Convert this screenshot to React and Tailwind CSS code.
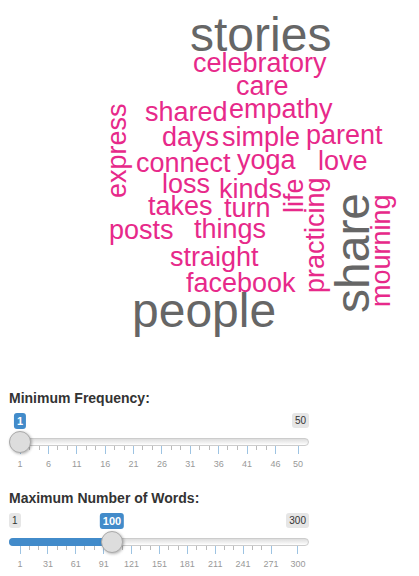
import { useState } from "react";

const MINOR = { size: 27, color: "#e7298a" };
const MAJOR = { size: 48, color: "#666666" };

// x / y mark the start of the baseline; vertical words read bottom to top.
const WORDS = [
  { text: "stories", x: 190, y: 51, ...MAJOR },
  { text: "celebratory", x: 193, y: 72, ...MINOR },
  { text: "care", x: 236, y: 95, ...MINOR },
  { text: "shared", x: 145, y: 121, ...MINOR },
  { text: "empathy", x: 229, y: 118, ...MINOR },
  { text: "days", x: 162, y: 146, ...MINOR },
  { text: "simple", x: 222, y: 146, ...MINOR },
  { text: "parent", x: 306, y: 144, ...MINOR },
  { text: "connect", x: 136, y: 172, ...MINOR },
  { text: "yoga", x: 237, y: 169, ...MINOR },
  { text: "love", x: 318, y: 170, ...MINOR },
  { text: "loss", x: 162, y: 193, ...MINOR },
  { text: "kinds", x: 219, y: 198, ...MINOR },
  { text: "takes", x: 148, y: 215, ...MINOR },
  { text: "turn", x: 224, y: 217, ...MINOR },
  { text: "posts", x: 109, y: 239, ...MINOR },
  { text: "things", x: 194, y: 238, ...MINOR },
  { text: "straight", x: 170, y: 266, ...MINOR },
  { text: "facebook", x: 186, y: 292, ...MINOR },
  { text: "people", x: 132, y: 327, ...MAJOR },
  { text: "express", x: 126, y: 198, vertical: true, ...MINOR },
  { text: "life", x: 303, y: 213, vertical: true, ...MINOR },
  { text: "practicing", x: 324, y: 293, vertical: true, ...MINOR },
  { text: "share", x: 369, y: 313, vertical: true, ...MAJOR },
  { text: "mourning", x: 390, y: 307, vertical: true, ...MINOR },
];

function WordCloud() {
  return (
    <svg
      viewBox="0 0 419 390"
      className="block w-full max-w-[419px]"
      role="img"
      aria-label="Word cloud"
    >
      {WORDS.map((w) => (
        <text
          key={w.text}
          fontSize={w.size}
          fill={w.color}
          transform={`translate(${w.x} ${w.y})${w.vertical ? " rotate(-90)" : ""}`}
        >
          {w.text}
        </text>
      ))}
    </svg>
  );
}

function Scale({ marks }) {
  return (
    <div className="flex px-[11px]" aria-hidden="true">
      {marks.map((mark, i) => {
        const last = i === marks.length - 1;
        const span = last ? 0 : marks[i + 1] - mark;
        const hasMinor = i < marks.length - 2;
        return (
          <div key={mark} className="flex min-w-0 basis-0" style={{ flexGrow: span }}>
            <div className="flex w-0 flex-col items-center">
              <div className="h-2 w-px bg-[#9dc3e2]" />
              <div className="mt-1 text-[9px] leading-3 text-[#999]">{mark}</div>
            </div>
            {hasMinor && (
              <div className="flex h-1 flex-1 justify-evenly">
                <div className="w-px bg-[#bbb]" />
                <div className="w-px bg-[#bbb]" />
              </div>
            )}
          </div>
        );
      })}
    </div>
  );
}

function Slider({ id, label, min, max, initial, marks }) {
  const [value, setValue] = useState(initial);
  const ratio = (value - min) / (max - min);
  const center = `calc(11px + (100% - 22px) * ${ratio})`;
  const fill = ratio === 0 ? "0px" : center;

  return (
    <div className="flex w-full max-w-[300px] flex-col">
      <label htmlFor={id} className="text-sm leading-4 font-bold text-[#333]">
        {label}
      </label>
      <div className="relative mt-[7px] flex h-4 items-start justify-between text-[10px] leading-[15px] text-[#333]">
        <span className={`rounded-[3px] bg-[#e6e6e6] px-[3px] ${ratio < 0.06 ? "invisible" : ""}`}>
          {min}
        </span>
        <span className={`rounded-[3px] bg-[#e6e6e6] px-[3px] ${ratio > 0.92 ? "invisible" : ""}`}>
          {max}
        </span>
        <output
          htmlFor={id}
          className="absolute top-0 -translate-x-1/2 rounded-[3px] bg-[#428bca] px-[3px] text-[11px] leading-4 font-bold text-white"
          style={{ left: center }}
        >
          {value}
        </output>
      </div>
      <div className="relative mt-[9px] flex h-2 items-center">
        <div className="absolute inset-0 overflow-hidden rounded-full border border-[#ccc] bg-linear-to-b from-[#ddd] to-white" />
        <div className="absolute inset-y-0 left-0 rounded-l-full bg-[#428bca]" style={{ width: fill }} />
        <input
          id={id}
          type="range"
          min={min}
          max={max}
          value={value}
          onChange={(e) => setValue(Number(e.target.value))}
          className="relative -my-[7px] h-[22px] w-full shrink-0 cursor-pointer appearance-none bg-transparent [&::-webkit-slider-thumb]:h-[22px] [&::-webkit-slider-thumb]:w-[22px] [&::-webkit-slider-thumb]:appearance-none [&::-webkit-slider-thumb]:rounded-full [&::-webkit-slider-thumb]:border [&::-webkit-slider-thumb]:border-[#aaa] [&::-webkit-slider-thumb]:bg-[#ddd] [&::-webkit-slider-thumb]:shadow-[1px_1px_3px_rgba(0,0,0,0.3)]"
        />
      </div>
      <Scale marks={marks} />
    </div>
  );
}

export default function App() {
  return (
    <main className="bg-white font-['Liberation_Sans',Arial,sans-serif]">
      <WordCloud />
      <form className="flex flex-col gap-5 px-[9px]">
        <Slider
          id="freq"
          label="Minimum Frequency:"
          min={1}
          max={50}
          initial={1}
          marks={[1, 6, 11, 16, 21, 26, 31, 36, 41, 46, 50]}
        />
        <Slider
          id="max"
          label="Maximum Number of Words:"
          min={1}
          max={300}
          initial={100}
          marks={[1, 31, 61, 91, 121, 151, 181, 211, 241, 271, 300]}
        />
      </form>
    </main>
  );
}
